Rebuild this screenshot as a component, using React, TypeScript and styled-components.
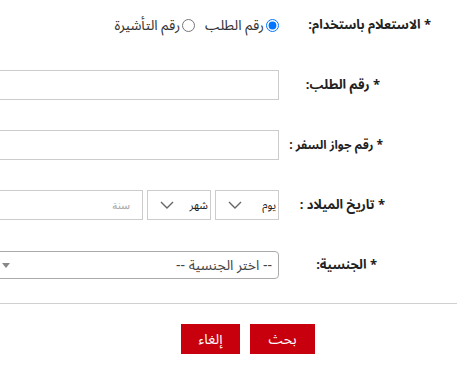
import styled, { createGlobalStyle } from "styled-components"

const GlobalStyle = createGlobalStyle`
  html, body {
    margin: 0;
    padding: 0;
    background: #fff;
    overflow: hidden;
  }
  body {
    font-family: "Noto Sans Arabic", "Noto Sans", "DejaVu Sans", sans-serif;
  }
`

const Page = styled.div`
  width: 457px;
  height: 368px;
  overflow: hidden;
  direction: rtl;
  padding-top: 10px;
  box-sizing: border-box;
`

const Fields = styled.div`
  display: flex;
  flex-direction: column;
  gap: 30px;
`

const Row = styled.div`
  display: flex;
  align-items: center;
  height: 30px;
`

const Label = styled.label<{ $inset: number; $size?: number }>`
  width: 178px;
  flex-shrink: 0;
  box-sizing: border-box;
  padding-right: ${(p) => p.$inset}px;
  font-size: ${(p) => p.$size ?? 13}px;
  font-weight: bold;
  color: #222;
  white-space: nowrap;
`

const RadioGroup = styled.div`
  display: flex;
  align-items: center;
  gap: 10px;
  font-size: 14px;
  color: #333;
`

const RadioOption = styled.label`
  display: flex;
  align-items: center;
  gap: 2px;
  white-space: nowrap;
`

const Radio = styled.input`
  width: 13px;
  height: 13px;
  margin: 0;
`

const TextInput = styled.input`
  width: 285px;
  height: 30px;
  flex-shrink: 0;
  box-sizing: border-box;
  border: 1px solid #ccc;
  padding: 0 8px;
  font-size: 14px;
  outline: none;
`

const DateGroup = styled.div`
  display: flex;
  gap: 4px;
  width: 285px;
  flex-shrink: 0;
`

const DateSelect = styled.div`
  width: 64px;
  height: 30px;
  box-sizing: border-box;
  border: 1px solid #ccc;
  display: flex;
  align-items: center;
  justify-content: space-between;
  padding: 0 2px 0 12px;
  font-size: 11px;
  color: #222;
`

const YearInput = styled.input`
  flex: 1;
  min-width: 0;
  height: 30px;
  box-sizing: border-box;
  border: 1px solid #ccc;
  padding: 0 12px 0 0;
  font-size: 11px;
  outline: none;
  &::placeholder {
    color: #aaa;
  }
`

const NationalitySelect = styled.div`
  width: 285px;
  height: 28px;
  flex-shrink: 0;
  box-sizing: border-box;
  border: 1px solid #aaa;
  border-radius: 4px;
  display: flex;
  align-items: center;
  justify-content: space-between;
  padding: 0 6px 0 7px;
  font-size: 14px;
  color: #444;
`

const Caret = styled.span`
  width: 0;
  height: 0;
  border-style: solid;
  border-width: 5px 4px 0 4px;
  border-color: #888 transparent transparent transparent;
`

const Divider = styled.hr`
  margin: 23px 0 20px;
  border: 0;
  border-top: 1px solid #d0d0d0;
`

const ButtonBar = styled.div`
  display: flex;
  gap: 10px;
  padding-right: 142px;
`

const Button = styled.button<{ $width: number }>`
  width: ${(p) => p.$width}px;
  height: 30px;
  padding: 0;
  border: 0;
  background: #c8000e;
  color: #fff;
  font-family: inherit;
  font-size: 14px;
  cursor: pointer;
`

const Chevron = () => (
  <svg width="14" height="8" viewBox="0 0 14 8">
    <path d="M1 1 L7 7 L13 1" fill="none" stroke="#666" strokeWidth="1.4" />
  </svg>
)

export default function App() {
  return (
    <>
      <GlobalStyle />
      <Page>
        <Fields>
          <Row>
            <Label $inset={26}>* الاستعلام باستخدام:</Label>
            <RadioGroup>
              <RadioOption>
                <Radio type="radio" name="by" defaultChecked />
                رقم الطلب
              </RadioOption>
              <RadioOption>
                <Radio type="radio" name="by" />
                رقم التأشيرة
              </RadioOption>
            </RadioGroup>
          </Row>
          <Row>
            <Label $inset={77}>* رقم الطلب:</Label>
            <TextInput />
          </Row>
          <Row>
            <Label $inset={74} $size={12}>* رقم جواز السفر :</Label>
            <TextInput />
          </Row>
          <Row>
            <Label $inset={72}>* تاريخ الميلاد :</Label>
            <DateGroup>
              <DateSelect>
                يوم
                <Chevron />
              </DateSelect>
              <DateSelect>
                شهر
                <Chevron />
              </DateSelect>
              <YearInput placeholder="سنة" />
            </DateGroup>
          </Row>
          <Row>
            <Label $inset={80}>* الجنسية:</Label>
            <NationalitySelect>
              -- اختر الجنسية --
              <Caret />
            </NationalitySelect>
          </Row>
        </Fields>
        <Divider />
        <ButtonBar>
          <Button $width={65}>بحث</Button>
          <Button $width={59}>إلغاء</Button>
        </ButtonBar>
      </Page>
    </>
  )
}
